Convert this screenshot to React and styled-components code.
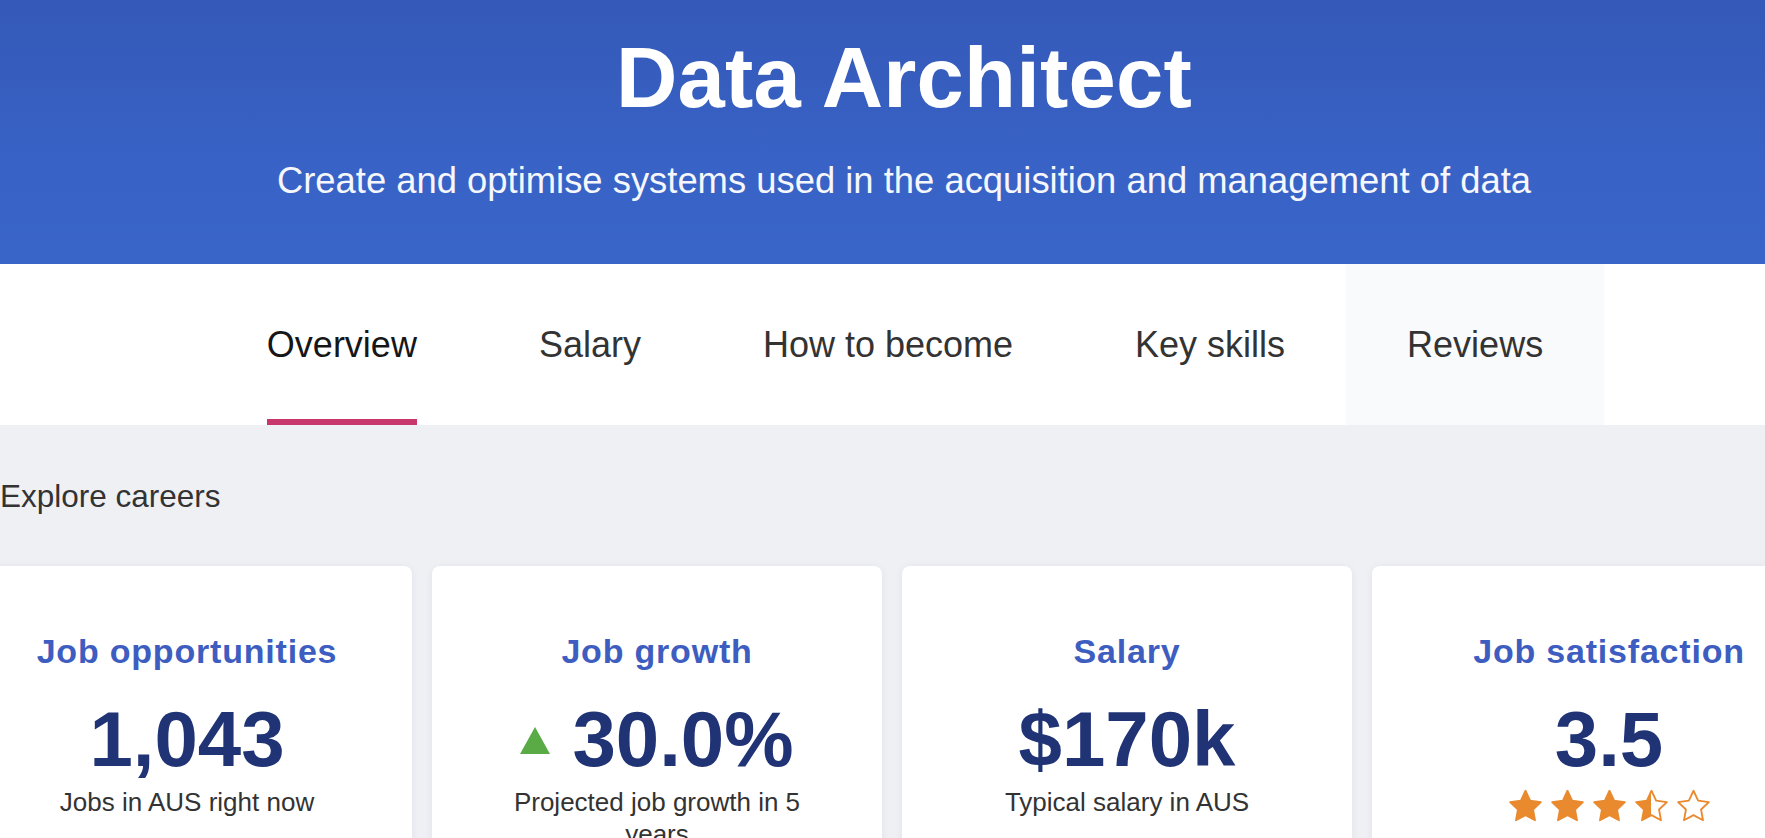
import React from "react";
import styled, { createGlobalStyle } from "styled-components";

const GlobalStyle = createGlobalStyle`
  html, body {
    margin: 0;
    padding: 0;
    overflow: hidden;
    background: #eff0f4;
    font-family: "Liberation Sans", Arial, Helvetica, sans-serif;
  }
  * { box-sizing: border-box; }
`;

const Page = styled.div`
  width: 100%;
  min-height: 838px;
  overflow: hidden;
`;

const Header = styled.header`
  background: linear-gradient(180deg, #3459b8 0%, #3862c5 60%, #3a65c8 100%);
  padding: 36px 0 65px 43px;
  display: flex;
  flex-direction: column;
  align-items: center;
  color: #ffffff;
`;

const Title = styled.h1`
  margin: 0;
  font-size: 85px;
  line-height: 84px;
  font-weight: 700;
  letter-spacing: 0.2px;
`;

const Subtitle = styled.p`
  margin: 43px 0 0;
  font-size: 36.4px;
  line-height: 36px;
  font-weight: 400;
  color: #f5f7fc;
`;

const TabBar = styled.nav`
  background: #ffffff;
  height: 161px;
  display: flex;
  justify-content: center;
  padding-left: 45px;
`;

const Tab = styled.div`
  padding: 0 61px;
  display: flex;
  align-items: stretch;
  background: ${(p) => (p.$hovered ? "#f9fafb" : "transparent")};
`;

const TabLabel = styled.span`
  display: flex;
  align-items: center;
  font-size: 36px;
  white-space: nowrap;
  color: ${(p) => (p.$active ? "#161616" : "#333333")};
  border-top: 6px solid transparent;
  border-bottom: 6px solid ${(p) => (p.$active ? "#c8376b" : "transparent")};
`;

const Section = styled.section`
  padding-top: 55px;
  overflow: hidden;
`;

const SectionTitle = styled.h2`
  margin: 0 0 54px;
  font-size: 31.5px;
  line-height: 32px;
  font-weight: 400;
  color: #333333;
`;

const CardGrid = styled.div`
  display: grid;
  grid-template-columns: 450px 450px 450px 474px;
  gap: 20px;
  margin-left: -38px;
`;

const Card = styled.div`
  background: #ffffff;
  border-radius: 8px;
  box-shadow: 0 1px 8px rgba(30, 40, 80, 0.06);
  min-height: 330px;
  padding: 68px 60px 40px;
  display: flex;
  flex-direction: column;
  align-items: center;
  text-align: center;
`;

const CardLabel = styled.div`
  font-size: 34px;
  line-height: 34px;
  font-weight: 700;
  letter-spacing: 0.8px;
  color: #3d5dc0;
  white-space: nowrap;
`;

const ValueRow = styled.div`
  margin-top: 32px;
  display: flex;
  align-items: center;
  gap: 22px;
`;

const Value = styled.div`
  font-size: 78px;
  line-height: 78px;
  font-weight: 700;
  color: #1f3375;
  white-space: nowrap;
`;

const UpTriangle = styled.span`
  width: 0;
  height: 0;
  border-left: 15px solid transparent;
  border-right: 15px solid transparent;
  border-bottom: 27px solid #5aab46;
  margin-top: 2px;
`;

const CardNote = styled.div`
  margin-top: 8px;
  font-size: 26px;
  line-height: 32px;
  color: #333333;
`;

const Stars = styled.div`
  margin-top: 10px;
  display: flex;
  gap: 5px;
`;

const STAR =
  "M12 1.8l3.05 6.5 7.05.95-5.15 4.9 1.3 7.05L12 17.8l-6.25 3.4 1.3-7.05-5.15-4.9 7.05-.95z";

function Star({ kind, id }) {
  const orange = "#e98a2f";
  return (
    <svg width="37" height="35" viewBox="0 0 24 23" aria-hidden="true">
      {kind === "half" && (
        <defs>
          <linearGradient id={id} x1="0" x2="1" y1="0" y2="0">
            <stop offset="50%" stopColor={orange} />
            <stop offset="50%" stopColor="#ffffff" />
          </linearGradient>
        </defs>
      )}
      <path
        d={STAR}
        fill={kind === "full" ? orange : kind === "half" ? `url(#${id})` : "#ffffff"}
        stroke={orange}
        strokeWidth="1.2"
        strokeLinejoin="round"
      />
    </svg>
  );
}

const tabs = ["Overview", "Salary", "How to become", "Key skills", "Reviews"];

export default function App() {
  return (
    <Page>
      <GlobalStyle />
      <Header>
        <Title>Data Architect</Title>
        <Subtitle>
          Create and optimise systems used in the acquisition and management of data
        </Subtitle>
      </Header>
      <TabBar>
        {tabs.map((t, i) => (
          <Tab key={t} $hovered={t === "Reviews"}>
            <TabLabel $active={i === 0}>{t}</TabLabel>
          </Tab>
        ))}
      </TabBar>
      <Section>
        <SectionTitle>Explore careers</SectionTitle>
        <CardGrid>
          <Card>
            <CardLabel>Job opportunities</CardLabel>
            <ValueRow>
              <Value>1,043</Value>
            </ValueRow>
            <CardNote>Jobs in AUS right now</CardNote>
          </Card>
          <Card>
            <CardLabel>Job growth</CardLabel>
            <ValueRow>
              <UpTriangle />
              <Value>30.0%</Value>
            </ValueRow>
            <CardNote>Projected job growth in 5 years</CardNote>
          </Card>
          <Card>
            <CardLabel>Salary</CardLabel>
            <ValueRow>
              <Value>$170k</Value>
            </ValueRow>
            <CardNote>Typical salary in AUS</CardNote>
          </Card>
          <Card>
            <CardLabel>Job satisfaction</CardLabel>
            <ValueRow>
              <Value>3.5</Value>
            </ValueRow>
            <Stars>
              <Star kind="full" />
              <Star kind="full" />
              <Star kind="full" />
              <Star kind="half" id="half-star" />
              <Star kind="empty" />
            </Stars>
          </Card>
        </CardGrid>
      </Section>
    </Page>
  );
}
